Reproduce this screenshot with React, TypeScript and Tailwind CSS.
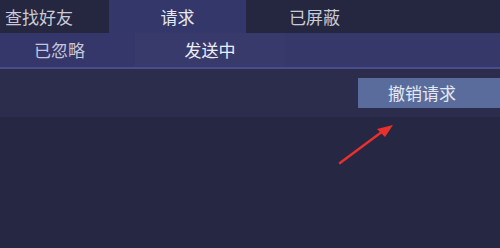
import React from "react";

const font = { fontFamily: '"Noto Sans CJK SC", "Noto Sans", sans-serif' };

export default function App() {
  return (
    <div
      className="relative w-[500px] h-[248px] overflow-hidden bg-[#262742] flex flex-col"
      style={font}
    >
      {/* Top tabs */}
      <div className="flex h-[33px] shrink-0 bg-[#25263f]">
        <div className="w-[109px] flex items-center pl-[5px] text-[17px] text-[#c9cad6]">
          查找好友
        </div>
        <div className="w-[137px] flex items-center justify-center bg-[#34376a] text-[17px] text-[#e6e7f0]">
          请求
        </div>
        <div className="w-[137px] flex items-center justify-center text-[17px] text-[#c9cad6]">
          已屏蔽
        </div>
        <div className="flex-1" />
      </div>

      {/* Sub tabs */}
      <div className="flex h-[36px] shrink-0 bg-[#35376a] border-b-2 border-[#4a4c8e]">
        <div className="w-[135px] flex items-center justify-center pr-[16px] text-[17px] text-[#c4c6d8]">
          已忽略
        </div>
        <div className="w-[150px] flex items-center justify-center bg-[#383a6c] text-[17px] text-[#eceef6]">
          发送中
        </div>
        <div className="flex-1 bg-[#36386a]" />
      </div>

      {/* Action band */}
      <div className="flex h-[48px] shrink-0 items-center justify-end bg-[#2c2d4d]">
        <button className="w-[142px] h-[30px] flex items-center justify-center pr-[14px] bg-[#5a6c9c] text-[17px] text-[#e4e8f2]">
          撤销请求
        </button>
      </div>

      <div className="flex-1 bg-[#262742]" />

      {/* Red annotation arrow */}
      <svg
        className="absolute left-0 top-0"
        width="500"
        height="248"
        viewBox="0 0 500 248"
      >
        <path d="M340 163 L383 131" stroke="#e8302f" strokeWidth="2.5" strokeLinecap="round" />
        <path d="M393 125 L377 129 L385 137 Z" fill="#e8302f" />
      </svg>
    </div>
  );
}
